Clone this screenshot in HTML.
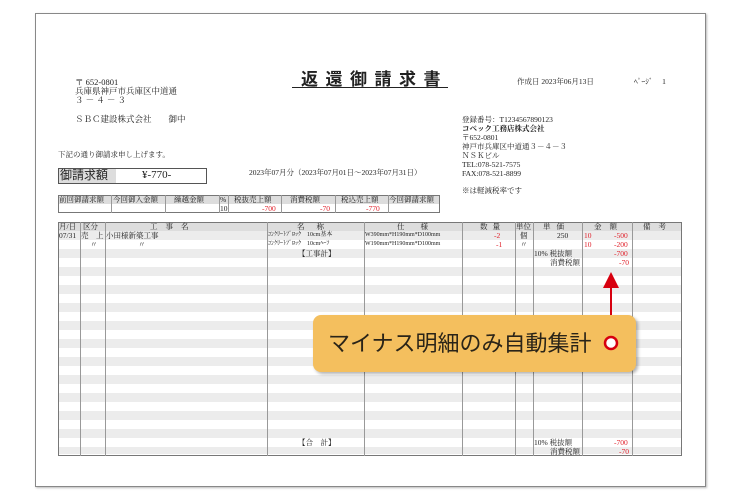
<!DOCTYPE html>
<html><head><meta charset="utf-8"><style>
body{margin:0;width:740px;height:500px;background:#fff;position:relative;overflow:hidden;font-family:"Liberation Serif","Noto Serif CJK SC","Noto Sans CJK JP",serif;color:#222}
.a{position:absolute;white-space:nowrap;line-height:1}
.s{font-size:7.5px}.m{font-size:8.5px}
.r{color:#e0202a}
.vl{position:absolute;width:1px;background:#999}
</style></head><body>
<div style="position:absolute;left:35px;top:13px;width:669px;height:472px;border:1px solid #888;box-shadow:1px 1px 2px #bbb"></div>

<div class="a m" style="left:75px;top:78px">〒 652-0801</div>
<div class="a m" style="left:75px;top:87px">兵庫県神戸市兵庫区中道通</div>
<div class="a m" style="left:75px;top:96px">３ － ４ － ３</div>
<div class="a m" style="left:75px;top:115px">ＳＢＣ建設株式会社　　御中</div>
<div class="a s" style="left:58px;top:151px">下記の通り御請求申し上げます。</div>

<div class="a" style="left:301px;top:69px;font-size:17px;font-weight:bold;letter-spacing:7.5px;font-family:'Noto Sans CJK JP',sans-serif">返還御請求書</div>
<div style="position:absolute;left:292px;top:87px;width:156px;height:1px;background:#222"></div>

<div class="a s" style="left:517px;top:78px">作成日 2023年06月13日</div>
<div class="a s" style="left:634px;top:78px">ﾍﾟｰｼﾞ　 1</div>

<div class="a s" style="left:462px;top:115px;line-height:9px">登録番号：T1234567890123<br><b>コベック工務店株式会社</b><br>〒652-0801<br>神戸市兵庫区中道通３－４－３<br>ＮＳＫビル<br>TEL:078-521-7575<br>FAX:078-521-8899</div>
<div class="a s" style="left:462px;top:187px">※は軽減税率です</div>

<div style="position:absolute;left:58px;top:168px;width:147px;height:14px;border:1px solid #555"></div>
<div style="position:absolute;left:59px;top:169px;width:57px;height:14px;background:#ddd"></div>
<div class="a" style="left:60px;top:169px;font-size:12px;font-family:'Noto Sans CJK JP',sans-serif">御請求額</div>
<div class="a" style="left:142px;top:170px;font-size:11px">¥-770-</div>
<div class="a s" style="left:249px;top:169px">2023年07月分（2023年07月01日～2023年07月31日）</div>

<!-- summary -->
<div style="position:absolute;left:58px;top:195px;width:382px;height:18px;border:1px solid #777;box-sizing:border-box"></div>
<div style="position:absolute;left:59px;top:196px;width:380px;height:8px;background:#ddd"></div>
<div class="vl" style="left:111px;top:195px;height:18px"></div>
<div class="vl" style="left:165px;top:195px;height:18px"></div>
<div class="vl" style="left:219px;top:195px;height:18px"></div>
<div class="vl" style="left:228px;top:195px;height:18px"></div>
<div class="vl" style="left:281px;top:195px;height:18px"></div>
<div class="vl" style="left:335px;top:195px;height:18px"></div>
<div class="vl" style="left:388px;top:195px;height:18px"></div>
<div class="a s" style="left:59px;top:196px">前回御請求額</div>
<div class="a s" style="left:113px;top:196px">今回御入金額</div>
<div class="a s" style="left:174px;top:196px">繰越金額</div>
<div class="a s" style="left:220px;top:196px">%</div>
<div class="a s" style="left:234px;top:196px">税抜売上額</div>
<div class="a s" style="left:290px;top:196px">消費税額</div>
<div class="a s" style="left:341px;top:196px">税込売上額</div>
<div class="a s" style="left:389px;top:196px">今回御請求額</div>
<div class="a s" style="left:220px;top:205px">10</div>
<div class="a s r" style="left:262px;top:205px">-700</div>
<div class="a s r" style="left:320px;top:205px">-70</div>
<div class="a s r" style="left:366px;top:205px">-770</div>

<!-- main table -->
<div style="position:absolute;left:58px;top:222px;width:624px;height:234px;border:1px solid #777;box-sizing:border-box;background:repeating-linear-gradient(#fff 0 9px,#ececec 9px 18px);background-position:0 -1px"></div>
<div style="position:absolute;left:59px;top:223px;width:622px;height:8px;background:#ddd"></div>
<div class="vl" style="left:80px;top:222px;height:234px"></div>
<div class="vl" style="left:105px;top:222px;height:234px"></div>
<div class="vl" style="left:267px;top:222px;height:234px"></div>
<div class="vl" style="left:364px;top:222px;height:234px"></div>
<div class="vl" style="left:462px;top:222px;height:234px"></div>
<div class="vl" style="left:515px;top:222px;height:234px"></div>
<div class="vl" style="left:533px;top:222px;height:234px"></div>
<div class="vl" style="left:582px;top:222px;height:234px"></div>
<div class="vl" style="left:632px;top:222px;height:234px"></div>

<div class="a s" style="left:59px;top:223px">月/日</div>
<div class="a s" style="left:83px;top:223px">区分</div>
<div class="a s" style="left:150px;top:223px;letter-spacing:8px">工事名</div>
<div class="a s" style="left:297px;top:223px;letter-spacing:12px">名称</div>
<div class="a s" style="left:397px;top:223px;letter-spacing:16px">仕様</div>
<div class="a s" style="left:480px;top:223px;letter-spacing:5px">数量</div>
<div class="a s" style="left:516px;top:223px">単位</div>
<div class="a s" style="left:543px;top:223px;letter-spacing:6px">単価</div>
<div class="a s" style="left:594px;top:223px;letter-spacing:8px">金額</div>
<div class="a s" style="left:643px;top:223px;letter-spacing:8px">備考</div>

<div class="a s" style="left:59px;top:232px">07/31</div>
<div class="a s" style="left:81px;top:232px">売　上</div>
<div class="a s" style="left:106px;top:232px">小田様新築工事</div>
<div class="a s" style="left:268px;top:232px;font-size:6px">ｺﾝｸﾘｰﾄﾌﾞﾛｯｸ　10cm基本</div>
<div class="a s" style="left:365px;top:232px;font-size:6px">W390mm*H190mm*D100mm</div>
<div class="a s r" style="left:494px;top:232px">-2</div>
<div class="a s" style="left:520px;top:232px">個</div>
<div class="a s" style="left:557px;top:232px">250</div>
<div class="a s r" style="left:584px;top:232px">10</div>
<div class="a s r" style="left:614px;top:232px">-500</div>

<div class="a s" style="left:90px;top:241px">〃</div>
<div class="a s" style="left:138px;top:241px">〃</div>
<div class="a s" style="left:268px;top:241px;font-size:6px">ｺﾝｸﾘｰﾄﾌﾞﾛｯｸ　10cmﾍｰﾌ</div>
<div class="a s" style="left:365px;top:241px;font-size:6px">W190mm*H190mm*D100mm</div>
<div class="a s r" style="left:496px;top:241px">-1</div>
<div class="a s" style="left:520px;top:241px">〃</div>
<div class="a s r" style="left:584px;top:241px">10</div>
<div class="a s r" style="left:614px;top:241px">-200</div>

<div class="a s" style="left:298px;top:250px">【工事計】</div>
<div class="a s" style="left:534px;top:250px">10% 税抜額</div>
<div class="a s r" style="left:614px;top:250px">-700</div>
<div class="a s" style="left:550px;top:259px">消費税額</div>
<div class="a s r" style="left:619px;top:259px">-70</div>

<div class="a s" style="left:298px;top:439px">【合　計】</div>
<div class="a s" style="left:534px;top:439px">10% 税抜額</div>
<div class="a s r" style="left:614px;top:439px">-700</div>
<div class="a s" style="left:550px;top:448px">消費税額</div>
<div class="a s r" style="left:619px;top:448px">-70</div>

<!-- callout -->
<svg style="position:absolute;left:0;top:0" width="740" height="500">
<line x1="611" y1="286" x2="611" y2="338" stroke="#d7000f" stroke-width="2"/>
<polygon points="611,272 603,288 619,288" fill="#d7000f"/>
</svg>
<div style="position:absolute;left:313px;top:315px;width:323px;height:57px;background:#f4bf5e;border-radius:8px;box-shadow:2px 2px 3px rgba(0,0,0,.3)"></div>
<div class="a" style="left:328px;top:331px;font-size:22px;color:#2a2418;font-family:'Noto Sans CJK JP',sans-serif">マイナス明細のみ自動集計</div>
<svg style="position:absolute;left:0;top:0" width="740" height="500">
<circle cx="611" cy="343" r="6" fill="#fff" stroke="#d7000f" stroke-width="2.5"/>
</svg>
</body></html>
